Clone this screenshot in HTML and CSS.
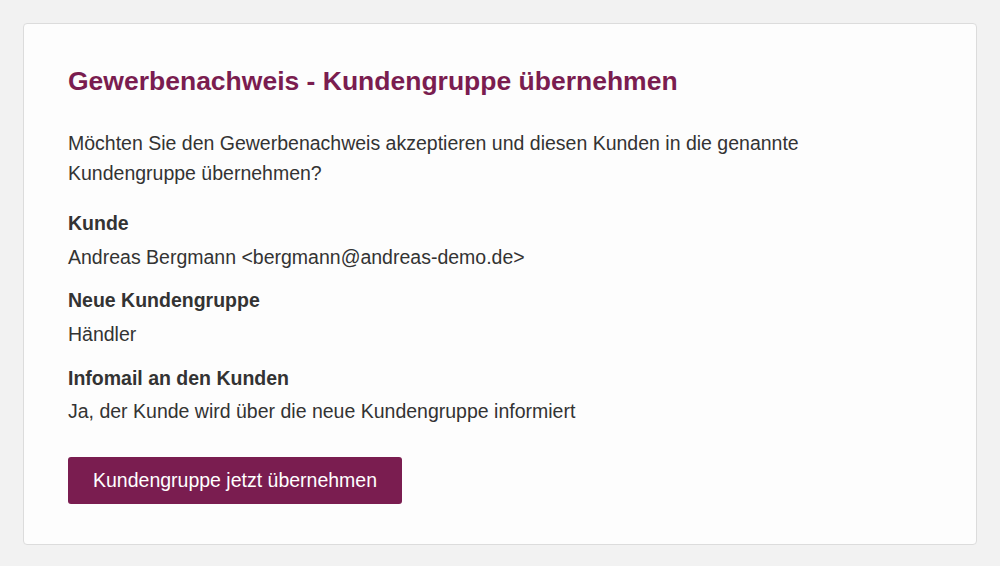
FILE: index.html
```html
<!DOCTYPE html>
<html>
<head>
	<meta charset="utf-8">
	<title>Gewerbenachweis - Kundengruppe übernehmen</title>
	<link rel="stylesheet" href="styles.css">
</head>
<body>

	<div class="card">
		<h1 class="card-title">Gewerbenachweis - Kundengruppe übernehmen</h1>

		<p class="intro">Möchten Sie den Gewerbenachweis akzeptieren und diesen Kunden in die genannte Kundengruppe übernehmen?</p>

		<dl class="details">
			<dt>Kunde</dt>
			<dd>Andreas Bergmann &lt;bergmann@andreas-demo.de&gt;</dd>

			<dt>Neue Kundengruppe</dt>
			<dd>Händler</dd>

			<dt class="last">Infomail an den Kunden</dt>
			<dd>Ja, der Kunde wird über die neue Kundengruppe informiert</dd>
		</dl>

		<button class="btn-primary" type="button">Kundengruppe jetzt übernehmen</button>
	</div>

</body>
</html>
```

FILE: styles.css
```css
html, body {
	margin: 0;
	padding: 0;
}

body {
	background-color: #f2f2f2;
	font-family: "Liberation Sans", Arial, sans-serif;
	color: #333;
	padding: 23px;
	box-sizing: border-box;
	height: 566px;
}

.card {
	background-color: #fdfdfd;
	border: 1px solid #dcdcdc;
	border-radius: 4px;
	padding: 43px 44px 40px 44px;
}

.card-title {
	margin: 0 0 32px 0;
	font-size: 26.5px;
	line-height: 29px;
	font-weight: bold;
	color: #7a1d50;
}

.intro {
	margin: 0 0 20px 0;
	font-size: 19.5px;
	line-height: 30px;
	max-width: 790px;
}

.details {
	margin: 0 0 32px 0;
	font-size: 19.5px;
	line-height: 30px;
}

.details dt {
	font-weight: bold;
	margin-bottom: 4px;
}

.details dt.last {
	margin-top: 14px;
	margin-bottom: 3px;
}

.details dd {
	margin: 0 0 13px 0;
}

.details dd:last-child {
	margin-bottom: 0;
}

.btn-primary {
	display: block;
	border: none;
	outline: none;
	cursor: pointer;
	background-color: #7a1d50;
	color: #fff;
	font-family: "Liberation Sans", Arial, sans-serif;
	font-size: 19.5px;
	height: 47px;
	padding: 0 25px;
	border-radius: 3px;
	margin-top: -1px;
}
```
